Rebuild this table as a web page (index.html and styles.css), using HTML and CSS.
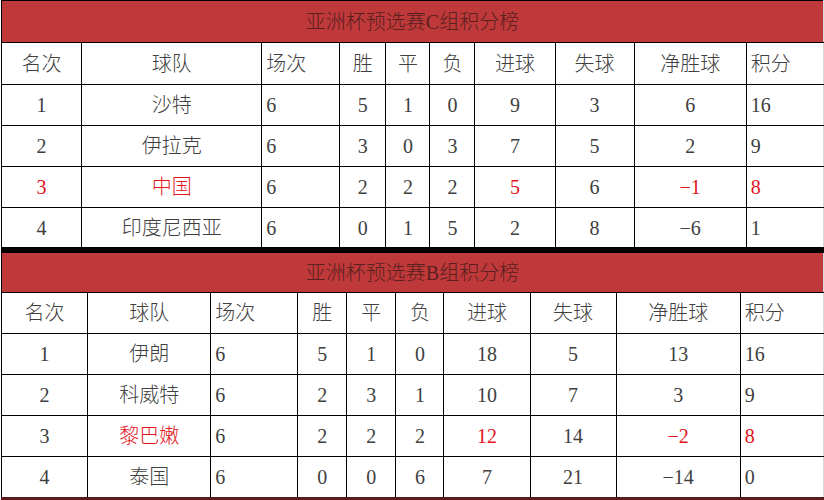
FILE: index.html
```html
<!DOCTYPE html>
<html lang="zh">
<head>
<meta charset="utf-8">
<link rel="stylesheet" href="styles.css">
</head>
<body>
<div class="page">
<table class="standings group-c">
  <colgroup>
    <col class="c1"><col class="c2"><col class="c3"><col class="c4"><col class="c5">
    <col class="c6"><col class="c7"><col class="c8"><col class="c9"><col class="c10">
  </colgroup>
  <tr class="title"><td colspan="10">亚洲杯预选赛C组积分榜</td></tr>
  <tr class="head">
    <td>名次</td><td>球队</td><td class="l">场次</td><td>胜</td><td>平</td><td>负</td><td>进球</td><td>失球</td><td>净胜球</td><td class="l">积分</td>
  </tr>
  <tr>
    <td>1</td><td>沙特</td><td class="l">6</td><td>5</td><td>1</td><td>0</td><td>9</td><td>3</td><td>6</td><td class="l">16</td>
  </tr>
  <tr>
    <td>2</td><td>伊拉克</td><td class="l">6</td><td>3</td><td>0</td><td>3</td><td>7</td><td>5</td><td>2</td><td class="l">9</td>
  </tr>
  <tr>
    <td class="red">3</td><td class="red">中国</td><td class="l">6</td><td>2</td><td>2</td><td>2</td><td class="red">5</td><td>6</td><td class="red">−1</td><td class="l red">8</td>
  </tr>
  <tr class="last">
    <td>4</td><td>印度尼西亚</td><td class="l">6</td><td>0</td><td>1</td><td>5</td><td>2</td><td>8</td><td>−6</td><td class="l">1</td>
  </tr>
</table>
<table class="standings group-b">
  <colgroup>
    <col class="c1"><col class="c2"><col class="c3"><col class="c4"><col class="c5">
    <col class="c6"><col class="c7"><col class="c8"><col class="c9"><col class="c10">
  </colgroup>
  <tr class="title"><td colspan="10">亚洲杯预选赛B组积分榜</td></tr>
  <tr class="head">
    <td>名次</td><td>球队</td><td class="l">场次</td><td>胜</td><td>平</td><td>负</td><td>进球</td><td>失球</td><td>净胜球</td><td class="l">积分</td>
  </tr>
  <tr>
    <td>1</td><td>伊朗</td><td class="l">6</td><td>5</td><td>1</td><td>0</td><td>18</td><td>5</td><td>13</td><td class="l">16</td>
  </tr>
  <tr>
    <td>2</td><td>科威特</td><td class="l">6</td><td>2</td><td>3</td><td>1</td><td>10</td><td>7</td><td>3</td><td class="l">9</td>
  </tr>
  <tr>
    <td>3</td><td class="red">黎巴嫩</td><td class="l">6</td><td>2</td><td>2</td><td>2</td><td class="red">12</td><td>14</td><td class="red">−2</td><td class="l red">8</td>
  </tr>
  <tr class="last">
    <td>4</td><td>泰国</td><td class="l">6</td><td>0</td><td>0</td><td>6</td><td>7</td><td>21</td><td>−14</td><td class="l">0</td>
  </tr>
</table>
</div>
</body>
</html>
```
FILE: styles.css
```css
html, body {
  margin: 0;
  padding: 0;
  background: #ffffff;
}
.page {
  width: 824px;
  height: 500px;
  overflow: hidden;
  padding-left: 1px;
  box-sizing: border-box;
}
.standings {
  border-collapse: collapse;
  table-layout: fixed;
  width: 823px;
  font-family: "Liberation Serif", "Noto Sans CJK SC", serif;
  font-weight: 300;
  font-size: 20px;
  color: #404040;
  border-left: 1px solid #000;
  border-right: 1px solid #d8d8d8;
}
.standings td {
  height: 40px;
  padding: 0;
  border: 1px solid #000;
  text-align: center;
  vertical-align: middle;
  white-space: nowrap;
  line-height: 20px;
}
.standings td.l {
  text-align: left;
  padding-left: 4px;
}
.standings td.red {
  color: #e3141c;
}
.standings tr.title td {
  background: #c0393a;
  color: #5a1f1f;
  height: 40px;
  border-right-color: #d8d8d8;
}
.group-c tr.title td {
  border-top: 1px solid #000;
  height: 41px;
}
.group-c tr.head td {
  height: 41px;
}
.group-c tr.last td {
  border-bottom: 3px solid #000;
  height: 39px;
}
.group-b tr.title td {
  border-top: 3px solid #000;
  height: 39px;
}
.group-b tr.last td {
  border-bottom: 3px solid #5a1c1c;
}
.standings td:last-child {
  border-right-color: #d8d8d8;
}

.group-c .c1 { width: 80px; }
.group-c .c2 { width: 180px; }
.group-c .c3 { width: 78px; }
.group-c .c4 { width: 46px; }
.group-c .c5 { width: 44px; }
.group-c .c6 { width: 45px; }
.group-c .c7 { width: 80px; }
.group-c .c8 { width: 79px; }
.group-c .c9 { width: 112px; }
.group-c .c10 { width: 77px; }

.group-b .c1 { width: 86px; }
.group-b .c2 { width: 123px; }
.group-b .c3 { width: 87px; }
.group-b .c4 { width: 49px; }
.group-b .c5 { width: 49px; }
.group-b .c6 { width: 48px; }
.group-b .c7 { width: 86px; }
.group-b .c8 { width: 86px; }
.group-b .c9 { width: 124px; }
.group-b .c10 { width: 83px; }
```
